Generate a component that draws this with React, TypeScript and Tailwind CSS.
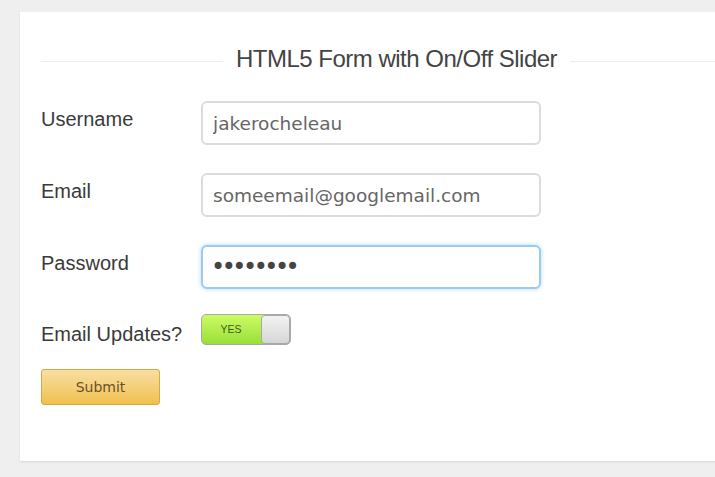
import { useState } from "react";

const labelFont = { fontFamily: '"Liberation Sans", Arial, Helvetica, sans-serif' };
const fieldFont = { fontFamily: '"DejaVu Sans", "Lucida Grande", Verdana, sans-serif' };

const FormRow = ({ label, children }: { label: string; children: React.ReactNode }) => (
  <div className="flex items-start">
    <label className="w-[160px] shrink-0 pt-[6px] text-[20px] leading-6 text-[#3a3a3a]" style={labelFont}>
      {label}
    </label>
    {children}
  </div>
);

const Toggle = ({ on }: { on: boolean }) => (
  <div className="flex h-[31px] w-[90px] overflow-hidden rounded-[5px] border border-[#a9a9a9] bg-gradient-to-b from-[#cdfb66] to-[#98df36]">
    <div className="flex flex-1 items-center justify-center pr-[1px] text-[10.5px] text-[#3f5d16]" style={labelFont}>
      {on ? "YES" : "NO"}
    </div>
    <div className="h-full w-[29px] rounded-[4px] border border-[#a9a9a9] bg-gradient-to-b from-[#f3f3f3] to-[#d6d6d6]" />
  </div>
);

export default function App() {
  const [updates] = useState(true);

  const inputBase =
    "h-[44px] w-[340px] rounded-[6px] border-2 bg-white px-[10px] text-[18.5px] text-[#666] outline-none";

  return (
    <div className="h-[477px] w-full overflow-hidden bg-[#efefef] pl-5 pt-3">
      <div className="h-[449px] w-[753px] bg-white px-[21px] pt-[33px] shadow-[0_1px_2px_rgba(0,0,0,0.1)]">
        {/* Title */}
        <div className="flex items-center gap-[13px]">
          <div className="mt-1 h-px flex-1 bg-[#eeeeee]" />
          <h1
            className="text-[24px] leading-[28px] tracking-[-0.5px] text-[#444]"
            style={{ fontFamily: '"Liberation Sans", "Helvetica Neue", Arial, sans-serif' }}
          >
            HTML5 Form with On/Off Slider
          </h1>
          <div className="mt-1 h-px flex-1 bg-[#eeeeee]" />
        </div>

        <form className="mt-[28px] flex flex-col">
          <FormRow label="Username">
            <input readOnly defaultValue="jakerocheleau" className={`${inputBase} border-[#dcdcdc]`} style={fieldFont} />
          </FormRow>
          <div className="h-[28px]" />
          <FormRow label="Email">
            <input
              readOnly
              defaultValue="someemail@googlemail.com"
              className={`${inputBase} border-[#dcdcdc]`}
              style={fieldFont}
            />
          </FormRow>
          <div className="h-[28px]" />
          <FormRow label="Password">
            <input
              type="password"
              readOnly
              defaultValue="password"
              className="h-[44px] w-[340px] rounded-[6px] border-2 border-[#9ccbf0] bg-white px-[8px] text-[24px] tracking-[-3.5px] text-[#444] shadow-[0_0_4px_rgba(82,168,236,0.45)] outline-none"
              style={fieldFont}
            />
          </FormRow>
          <div className="h-[25px]" />
          <div className="flex items-start">
            <label className="w-[160px] shrink-0 pt-[8px] text-[20px] leading-6 text-[#3a3a3a]" style={labelFont}>
              Email Updates?
            </label>
            <Toggle on={updates} />
          </div>
          <div className="h-[23px]" />
          <button
            type="button"
            className="h-[36px] w-[119px] rounded-[3px] border border-[#d6a944] bg-gradient-to-b from-[#f9dfa2] to-[#efc04a] text-[14px] text-[#6a5125]"
            style={fieldFont}
          >
            Submit
          </button>
        </form>
      </div>
    </div>
  );
}
